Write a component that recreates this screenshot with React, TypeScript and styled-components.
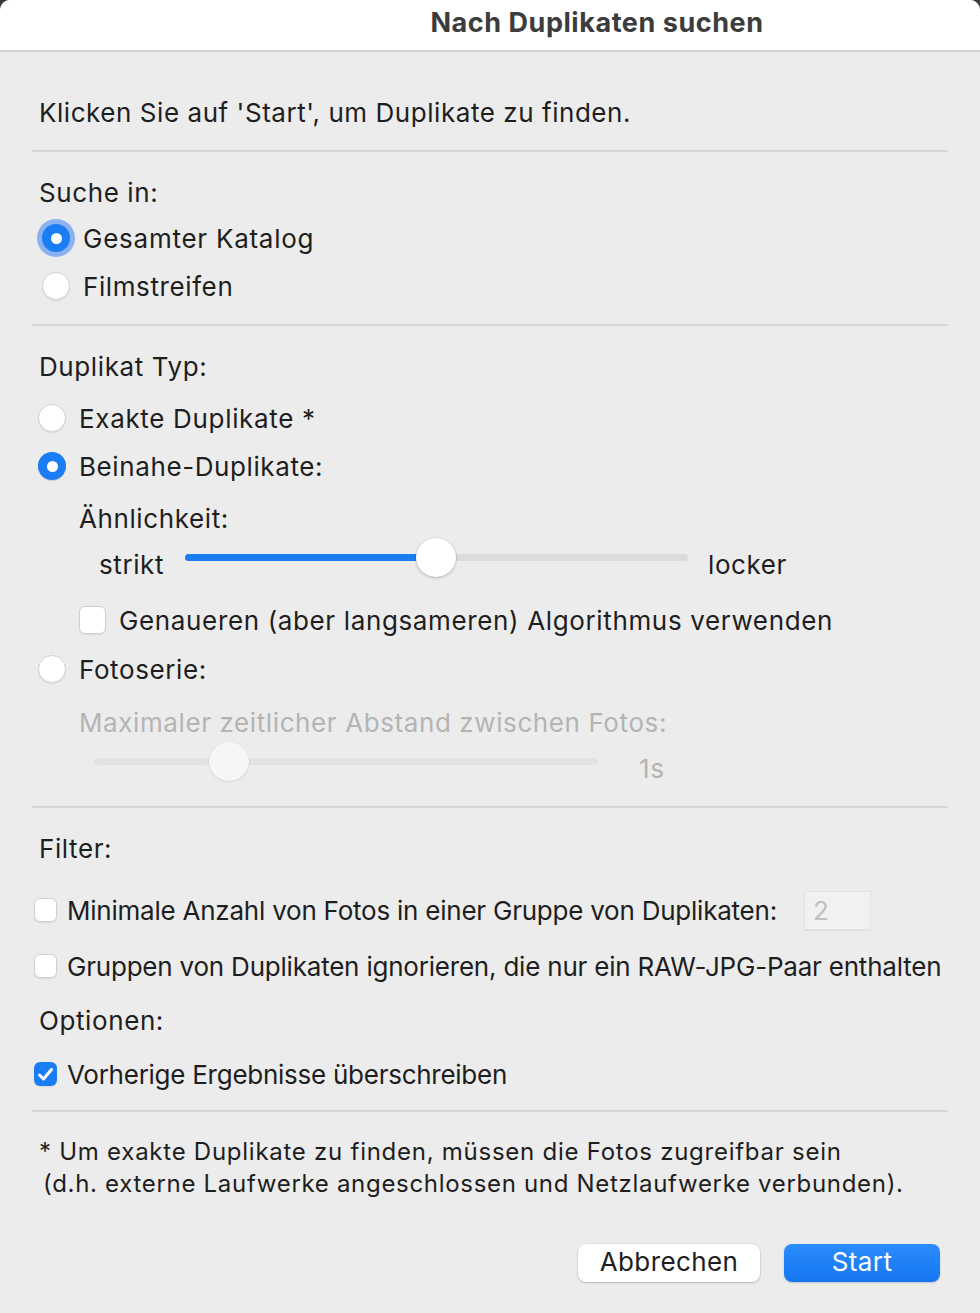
import React from "react";
import styled, { createGlobalStyle } from "styled-components";

const Global = createGlobalStyle`
  html, body { margin: 0; padding: 0; background: #3a3a3a; }
  body { font-family: Inter, "Noto Sans", "Liberation Sans", sans-serif; }
  * { box-sizing: border-box; }
`;

const Window = styled.div`
  width: 980px;
  min-height: 1313px;
  background: #ececec;
  border-radius: 10px 10px 0 0;
  overflow: hidden;
  display: flex;
  flex-direction: column;
`;

const TitleBar = styled.div`
  height: 52px;
  background: #ffffff;
  border-bottom: 2px solid #d4d4d4;
  display: flex;
  align-items: center;
  justify-content: center;
  padding-left: 214px;
  padding-bottom: 6px;
  font-size: 27px;
  font-weight: 700;
  color: #3c3c3c;
  letter-spacing: 0.55px;
  white-space: nowrap;
`;

const Content = styled.div`
  padding: 0 32px;
  display: flex;
  flex-direction: column;
`;

const Text = styled.span<{ $muted?: boolean; $ls?: number; $size?: number }>`
  font-size: ${(p) => p.$size ?? 26}px;
  color: ${(p) => (p.$muted ? "#b4b4b4" : "#1e1e1e")};
  letter-spacing: ${(p) => p.$ls ?? 0.6}px;
  white-space: nowrap;
`;

const Intro = styled.div`
  height: 40px;
  margin-top: 40px;
  padding-left: 7px;
  display: flex;
  align-items: center;
`;

const Divider = styled.div<{ $mt: number }>`
  height: 2px;
  background: #d6d6d6;
  margin-top: ${(p) => p.$mt}px;
`;

const SectionLabel = styled.div<{ $mt: number }>`
  height: 44px;
  margin-top: ${(p) => p.$mt}px;
  padding-left: 7px;
  display: flex;
  align-items: center;
`;

const Row = styled.div<{ $indent: number; $gap: number; $mt?: number }>`
  height: 48px;
  margin-top: ${(p) => p.$mt ?? 0}px;
  padding-left: ${(p) => p.$indent}px;
  display: flex;
  align-items: center;
  gap: ${(p) => p.$gap}px;
`;

const RadioCircle = styled.span<{ $on?: boolean; $focus?: boolean }>`
  width: 28px;
  height: 28px;
  border-radius: 50%;
  flex: none;
  display: flex;
  align-items: center;
  justify-content: center;
  background: ${(p) => (p.$on ? "#1a7df4" : "#ffffff")};
  border: ${(p) => (p.$on ? "none" : "1px solid #d2d2d2")};
  box-shadow: ${(p) =>
    p.$focus
      ? "0 0 0 5px rgba(60, 130, 240, 0.55)"
      : p.$on
      ? "0 1px 1px rgba(0,0,0,0.15)"
      : "0 1px 1px rgba(0,0,0,0.08)"};
  &::after {
    content: "";
    display: ${(p) => (p.$on ? "block" : "none")};
    width: 11px;
    height: 11px;
    border-radius: 50%;
    background: #fff;
  }
`;

const CheckBox = styled.span<{ $on?: boolean; $size: number }>`
  width: ${(p) => p.$size}px;
  height: ${(p) => p.$size + 1}px;
  border-radius: 6px;
  flex: none;
  display: flex;
  align-items: center;
  justify-content: center;
  background: ${(p) => (p.$on ? "#1a7df4" : "#ffffff")};
  border: ${(p) => (p.$on ? "none" : "1px solid #d0d0d0")};
  box-shadow: 0 1px 1px rgba(0, 0, 0, 0.08);
`;

const SliderRow = styled.div<{ $mt?: number }>`
  height: 44px;
  margin-top: ${(p) => p.$mt ?? 0}px;
  display: flex;
  align-items: center;
`;

const SideLabel = styled(Text)<{ $w?: number; $pl?: number }>`
  width: ${(p) => (p.$w ? `${p.$w}px` : "auto")};
  padding-left: ${(p) => p.$pl ?? 0}px;
  flex: none;
`;

const SliderWrap = styled.div<{ $width: number }>`
  position: relative;
  width: ${(p) => p.$width}px;
  height: 40px;
  margin-top: -14px;
  flex: none;
`;

const Track = styled.div<{ $disabled?: boolean }>`
  position: absolute;
  left: 0;
  right: 0;
  top: 17px;
  height: 7px;
  border-radius: 4px;
  background: ${(p) => (p.$disabled ? "#e3e3e3" : "#dcdcdc")};
`;

const Fill = styled.div`
  position: absolute;
  left: 0;
  top: 17px;
  height: 7px;
  border-radius: 4px;
  background: #1a7df4;
`;

const Thumb = styled.div<{ $disabled?: boolean }>`
  position: absolute;
  top: 1px;
  width: 40px;
  height: 39px;
  margin-left: -20px;
  border-radius: 50%;
  background: ${(p) => (p.$disabled ? "#f6f6f6" : "#ffffff")};
  box-shadow: ${(p) =>
    p.$disabled
      ? "0 1px 2px rgba(0,0,0,0.08), 0 0 0 0.5px rgba(0,0,0,0.05)"
      : "0 1px 3px rgba(0,0,0,0.22), 0 0 0 0.5px rgba(0,0,0,0.08)"};
`;

const NumberBox = styled.div`
  width: 67px;
  height: 39px;
  margin-left: 17px;
  background: #f1f1f1;
  border: 1px solid #e2e2e2;
  box-shadow: 0 1px 0 rgba(0, 0, 0, 0.05);
  display: flex;
  align-items: center;
  padding-left: 8px;
  font-size: 26px;
  color: #c0c0c0;
`;

const Footnote = styled.div`
  margin-top: 24px;
  padding-left: 7px;
  display: flex;
  flex-direction: column;
  font-size: 24px;
  line-height: 32px;
  color: #1e1e1e;
`;

const FootLine = styled.div<{ $indent?: number; $ls?: number }>`
  padding-left: ${(p) => p.$indent ?? 0}px;
  letter-spacing: ${(p) => p.$ls ?? 0}px;
  white-space: nowrap;
`;

const ButtonBar = styled.div`
  margin-top: 44px;
  display: flex;
  justify-content: flex-end;
  gap: 24px;
  padding-right: 8px;
`;

const Button = styled.button<{ $primary?: boolean; $w: number }>`
  width: ${(p) => p.$w}px;
  height: 38px;
  border: none;
  border-radius: 8px;
  font-family: inherit;
  font-size: 26px;
  letter-spacing: 0.4px;
  padding: 0 0 3px;
  display: flex;
  align-items: center;
  justify-content: center;
  color: ${(p) => (p.$primary ? "#ffffff" : "#1e1e1e")};
  background: ${(p) =>
    p.$primary ? "linear-gradient(#2a8cff, #1576ef)" : "#ffffff"};
  box-shadow: ${(p) =>
    p.$primary
      ? "0 1px 2px rgba(0,0,0,0.18)"
      : "0 1px 2px rgba(0,0,0,0.2), 0 0 0 0.5px rgba(0,0,0,0.1)"};
`;

const Check = () => (
  <svg width="17" height="15" viewBox="0 0 17 15">
    <path
      d="M2.5 8 L6.5 12 L14.5 2.5"
      fill="none"
      stroke="#fff"
      strokeWidth="3"
      strokeLinecap="round"
      strokeLinejoin="round"
    />
  </svg>
);

export default function App() {
  return (
    <>
      <Global />
      <Window>
        <TitleBar>Nach Duplikaten suchen</TitleBar>
        <Content>
          <Intro>
            <Text $ls={0.55}>Klicken Sie auf 'Start', um Duplikate zu finden.</Text>
          </Intro>
          <Divider $mt={18} />

          <SectionLabel $mt={18}>
            <Text>Suche in:</Text>
          </SectionLabel>
          <Row $indent={10} $gap={13}>
            <RadioCircle $on $focus />
            <Text $ls={0.75}>Gesamter Katalog</Text>
          </Row>
          <Row $indent={10} $gap={13}>
            <RadioCircle />
            <Text>Filmstreifen</Text>
          </Row>
          <Divider $mt={14} />

          <SectionLabel $mt={18}>
            <Text>Duplikat Typ:</Text>
          </SectionLabel>
          <Row $indent={6} $gap={13} $mt={6}>
            <RadioCircle />
            <Text $ls={0.67}>Exakte Duplikate *</Text>
          </Row>
          <Row $indent={6} $gap={13}>
            <RadioCircle $on />
            <Text>Beinahe-Duplikate:</Text>
          </Row>
          <Row $indent={47} $gap={0} $mt={4}>
            <Text>Ähnlichkeit:</Text>
          </Row>
          <SliderRow>
            <SideLabel $pl={67} $w={153}>strikt</SideLabel>
            <SliderWrap $width={503}>
              <Track />
              <Fill style={{ width: 251 }} />
              <Thumb style={{ left: 251 }} />
            </SliderWrap>
            <SideLabel $pl={20}>locker</SideLabel>
          </SliderRow>
          <Row $indent={47} $gap={13} $mt={10}>
            <CheckBox $size={27} />
            <Text $ls={0.64}>Genaueren (aber langsameren) Algorithmus verwenden</Text>
          </Row>
          <Row $indent={6} $gap={13} $mt={1}>
            <RadioCircle />
            <Text>Fotoserie:</Text>
          </Row>
          <Row $indent={47} $gap={0} $mt={5}>
            <Text $muted>Maximaler zeitlicher Abstand zwischen Fotos:</Text>
          </Row>
          <SliderRow>
            <SideLabel $w={62} />
            <SliderWrap $width={504}>
              <Track $disabled />
              <Thumb $disabled style={{ left: 135 }} />
            </SliderWrap>
            <SideLabel $muted $pl={41}>
              1s
            </SideLabel>
          </SliderRow>
          <Divider $mt={16} />

          <SectionLabel $mt={18}>
            <Text>Filter:</Text>
          </SectionLabel>
          <Row $indent={2} $gap={10} $mt={16}>
            <CheckBox $size={23} />
            <Text $ls={-0.23}>Minimale Anzahl von Fotos in einer Gruppe von Duplikaten:</Text>
            <NumberBox>2</NumberBox>
          </Row>
          <Row $indent={2} $gap={10} $mt={8}>
            <CheckBox $size={23} />
            <Text $ls={-0.21}>Gruppen von Duplikaten ignorieren, die nur ein RAW-JPG-Paar enthalten</Text>
          </Row>
          <SectionLabel $mt={8}>
            <Text>Optionen:</Text>
          </SectionLabel>
          <Row $indent={2} $gap={10} $mt={8}>
            <CheckBox $size={23} $on>
              <Check />
            </CheckBox>
            <Text $ls={-0.26}>Vorherige Ergebnisse überschreiben</Text>
          </Row>
          <Divider $mt={12} />

          <Footnote>
            <FootLine $ls={0.74}>
              * Um exakte Duplikate zu finden, müssen die Fotos zugreifbar sein
            </FootLine>
            <FootLine $indent={4} $ls={0.69}>
              (d.h. externe Laufwerke angeschlossen und Netzlaufwerke verbunden).
            </FootLine>
          </Footnote>

          <ButtonBar>
            <Button $w={182}>Abbrechen</Button>
            <Button $w={156} $primary>
              Start
            </Button>
          </ButtonBar>
        </Content>
      </Window>
    </>
  );
}
